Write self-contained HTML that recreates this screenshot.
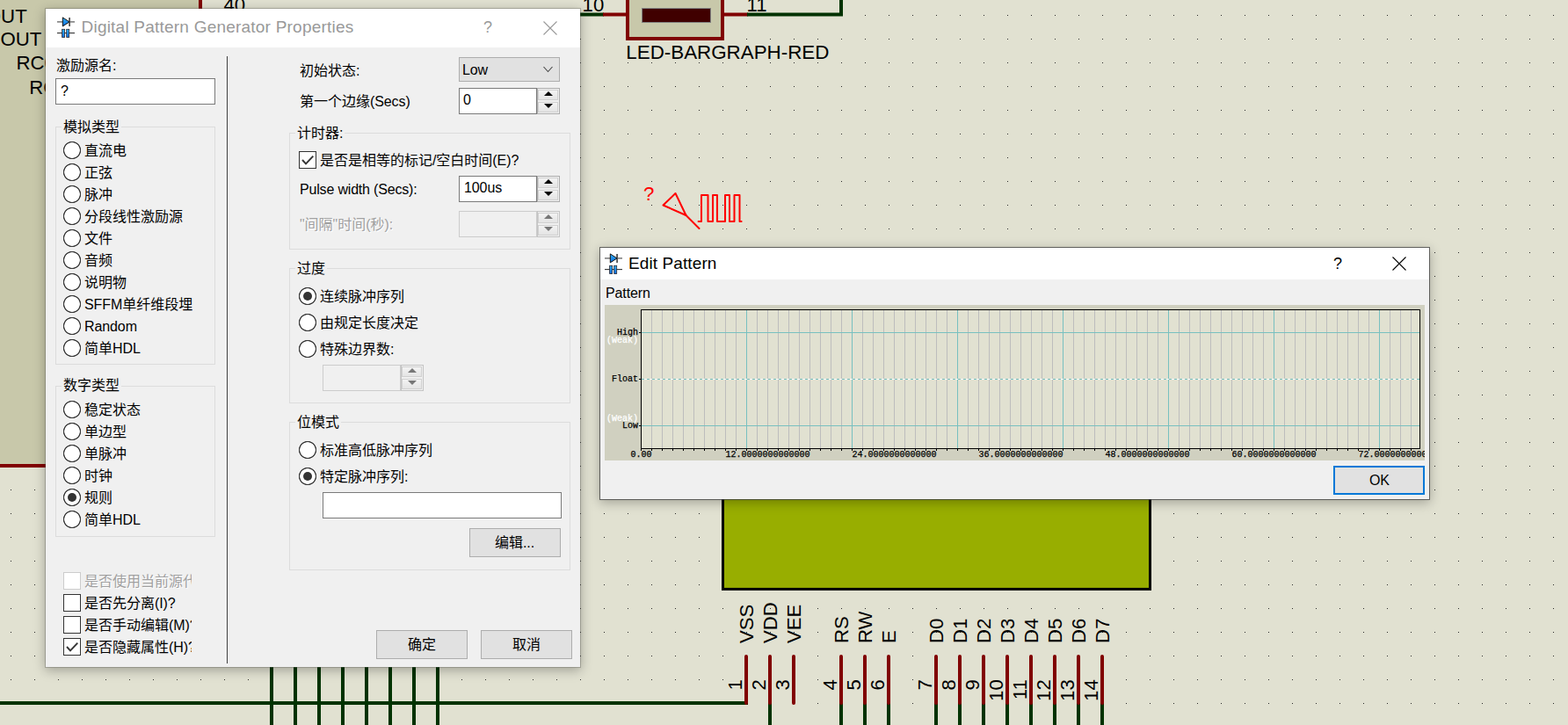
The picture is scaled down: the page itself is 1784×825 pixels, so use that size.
<!DOCTYPE html>
<html lang="zh">
<head>
<meta charset="utf-8">
<title>Digital Pattern Generator Properties</title>
<style>
*{box-sizing:border-box;margin:0;padding:0}
html,body{width:1784px;height:825px;overflow:hidden}
body{position:relative;background:#E1E1D1;font-family:"Liberation Sans","Noto Sans CJK SC",sans-serif;font-size:16px;color:#000}
.abs{position:absolute}
svg{display:block}
#sch{position:absolute;left:0;top:0}
#sch text{font-family:"Liberation Sans",sans-serif;font-size:22.2px;fill:#000}
.win{position:absolute;background:#F0F0F0}
.tbar{position:absolute;left:0;top:0;right:0;background:#fff}
.ttl{position:absolute;white-space:nowrap;font-size:19px;line-height:22px}
.lbl{position:absolute;white-space:nowrap;line-height:17px;height:17px;font-size:16px;letter-spacing:-0.1px}
.zh{display:inline-block;position:relative;height:17px;vertical-align:top;font-family:"Liberation Sans","Noto Sans CJK SC",sans-serif;font-size:16px;line-height:17px;letter-spacing:0;white-space:nowrap}
.dis{color:#A0A0A0;fill:#A0A0A0;text-shadow:1px 1px 0 #fff}
.grp{position:absolute;border:1px solid #DCDCDC}
.gl{background:#F0F0F0;padding:0 2px}
.radio{position:absolute;width:20px;height:20px}
.radio::before{content:"";position:absolute;left:-1px;top:-1px;width:22px;height:22px;background:radial-gradient(circle at 11px 11px,#fff 0,#fff 8.45px,#3a3a3a 9.05px,#3a3a3a 9.75px,rgba(58,58,58,0) 10.4px)}
.radio.on::after{content:"";position:absolute;left:5px;top:5px;width:10px;height:10px;border-radius:50%;background:#333}
.chk{position:absolute;width:20px;height:20px;background:#fff;border:1px solid #333}
.chk.off{border-color:#CCC}
.chk svg{position:absolute;left:0;top:0}
.edit{position:absolute;background:#fff;border:1px solid #7A7A7A}
.edit.off{background:#F0F0F0;border-color:#CCC}
.btn{position:absolute;background:#E1E1E1;border:1px solid #ADADAD;text-align:center}
.spin{position:absolute;width:26px;height:30px;border:1px solid #ADADAD;background:#F0F0F0}
.spin i{position:absolute;left:0;width:23px;height:12px;border:1px solid #D0D0D0;background:linear-gradient(#F3F3F3,#E4E4E4)}
.spin i.u{top:1px}.spin i.d{top:15px}
.spin i::after{content:"";position:absolute;left:5.5px;border-left:5px solid transparent;border-right:5px solid transparent}
.spin i.u::after{top:1px;border-bottom:5px solid #000}
.spin i.d::after{top:1px;border-top:5px solid #000}
.spin.off{border-color:#C4C4C4}
.spin.off i.u::after{border-bottom-color:#777}
.spin.off i.d::after{border-top-color:#777}
.clip{position:absolute;overflow:hidden}
#gr text{font-family:"Liberation Mono",monospace;font-size:10px;stroke:#000;stroke-width:.25px}
#gr text.w{fill:#fff;stroke:#fff}
</style>
</head>
<body>

<!-- ================= schematic background ================= -->
<svg id="sch" width="1784" height="825" viewBox="0 0 1784 825">
<defs>
<pattern id="dots" x="12" y="17" width="27" height="27" patternUnits="userSpaceOnUse"><rect x="0" y="0" width="1" height="1" fill="#2a2a2a"/></pattern>
</defs>
<rect width="1784" height="825" fill="#E1E1D1"/>
<rect width="1784" height="825" fill="url(#dots)"/>
<!-- MCU body -->
<rect x="-20" y="-20" width="248" height="550" fill="#C8C8AA" stroke="#800000" stroke-width="4"/>
<text x="30.7" y="25.5" text-anchor="end">OUT</text>
<text x="47.3" y="52" text-anchor="end">OUT</text>
<text x="18.4" y="79.4">RC0</text>
<text x="33.3" y="106.6">RC1</text>
<text x="254.5" y="12.5">40</text>
<!-- LED bargraph -->
<g stroke-width="4" fill="none">
<path d="M640 16.5H687" stroke="#003200"/><path d="M686 16.5H714" stroke="#800000"/>
<path d="M822 16.5H851" stroke="#800000"/><path d="M850 16.5H957V-5" stroke="#003200"/>
</g>
<rect x="714" y="-20" width="108" height="64" fill="#C8C8AA" stroke="#800000" stroke-width="4"/>
<rect x="730.5" y="9.5" width="78" height="16" fill="#400000" stroke="#808080" stroke-width="1"/>
<text x="687.3" y="12.5" text-anchor="end">10</text>
<text x="849.6" y="12.5">11</text>
<text x="712.3" y="67" style="font-size:22.36px">LED-BARGRAPH-RED</text>
<!-- generator -->
<g stroke="#FF0000" stroke-width="2" fill="none" stroke-linejoin="round" stroke-linecap="round">
<path d="M754.5 233.5L768.5 220L780.5 245Z"/><path d="M779.5 244L795.5 260"/>
<path d="M794.6 252H798V222H805.5V252H811V222H816V252H825V222H830V252H835.5V222H841.5V252H843.6"/>
</g>
<text x="732" y="228" style="fill:#FF0000">?</text>
<!-- LCD -->
<rect x="822.5" y="540" width="486" height="130.4" fill="#98AE00" stroke="#000" stroke-width="3"/>
<!-- bottom wires -->
<g stroke="#003200" stroke-width="4" fill="none">
<path d="M0 800H851"/>
<path d="M309 740V830M336 740V830M363 740V830M390 740V830M417 740V830M444 740V830M471 740V830M498 740V830"/>
<path d="M876 800V830M957 800V830M984 800V830M1011 800V830M1065 800V830M1092 800V830M1119 800V830M1146 800V830M1173 800V830M1200 800V830M1227 800V830M1254 800V830"/>
</g>
<g stroke="#800000" stroke-width="4" fill="none" stroke-linecap="round">
<path d="M849 747V800M876 747V800M903 747V800M957 747V800M984 747V800M1011 747V800M1065 747V800M1092 747V800M1119 747V800M1146 747V800M1173 747V800M1200 747V800M1227 747V800M1254 747V800"/>
</g>
<text transform="translate(857,732) rotate(-90)">VSS</text><text transform="translate(884,732) rotate(-90)">VDD</text><text transform="translate(911,732) rotate(-90)">VEE</text><text transform="translate(965,732) rotate(-90)">RS</text><text transform="translate(992,732) rotate(-90)">RW</text><text transform="translate(1019,732) rotate(-90)">E</text><text transform="translate(1073,732) rotate(-90)">D0</text><text transform="translate(1100,732) rotate(-90)">D1</text><text transform="translate(1127,732) rotate(-90)">D2</text><text transform="translate(1154,732) rotate(-90)">D3</text><text transform="translate(1181,732) rotate(-90)">D4</text><text transform="translate(1208,732) rotate(-90)">D5</text><text transform="translate(1235,732) rotate(-90)">D6</text><text transform="translate(1262,732) rotate(-90)">D7</text>
<text transform="translate(844,773.2) rotate(-90)" text-anchor="end">1</text><text transform="translate(871,773.2) rotate(-90)" text-anchor="end">2</text><text transform="translate(898,773.2) rotate(-90)" text-anchor="end">3</text><text transform="translate(952,773.2) rotate(-90)" text-anchor="end">4</text><text transform="translate(979,773.2) rotate(-90)" text-anchor="end">5</text><text transform="translate(1006,773.2) rotate(-90)" text-anchor="end">6</text><text transform="translate(1060,773.2) rotate(-90)" text-anchor="end">7</text><text transform="translate(1087,773.2) rotate(-90)" text-anchor="end">8</text><text transform="translate(1114,773.2) rotate(-90)" text-anchor="end">9</text><text transform="translate(1141,773.2) rotate(-90)" text-anchor="end">10</text><text transform="translate(1168,773.2) rotate(-90)" text-anchor="end">11</text><text transform="translate(1195,773.2) rotate(-90)" text-anchor="end">12</text><text transform="translate(1222,773.2) rotate(-90)" text-anchor="end">13</text><text transform="translate(1249,773.2) rotate(-90)" text-anchor="end">14</text>
</svg>

<!--DLG1-->
<!-- ================= Digital Pattern Generator Properties ================= -->
<div class="win" id="dlg1" style="left:52px;top:10px;width:608px;height:749px;box-shadow:0 0 0 1px rgba(90,90,80,.35),0 3px 12px 1px rgba(0,0,0,.28)">
<div class="tbar" style="height:44px"></div>
</div>
<!-- icon -->
<svg class="abs" style="left:64px;top:18px" width="22" height="26" viewBox="64 18 22 26">
<defs><linearGradient id="ig" x1="0" y1="0" x2="0" y2="1"><stop offset="0" stop-color="#2FB0F8"/><stop offset="1" stop-color="#0F6BDC"/></linearGradient></defs>
<path d="M65 24.9H85" stroke="#6E6E6E" stroke-width="1.4"/>
<path d="M65 37.6H85" stroke="#333" stroke-width="1.1"/>
<path d="M79.1 20V30" stroke="#555" stroke-width="1.8"/>
<path d="M71.3 19.9V29.9L79 24.9Z" fill="url(#ig)" stroke="#111" stroke-width="1"/>
<rect x="70.6" y="33.3" width="3" height="9.2" fill="url(#ig)" stroke="#2A2A33" stroke-width=".8"/>
<rect x="75.7" y="33.3" width="3" height="9.2" fill="url(#ig)" stroke="#2A2A33" stroke-width=".8"/>
</svg>
<div class="ttl" style="left:92.5px;top:20px;color:#999;letter-spacing:.22px">Digital Pattern Generator Properties</div>
<div class="ttl" style="left:550px;top:20px;color:#999;font-size:18px">?</div>
<svg class="abs" style="left:617px;top:23px" width="18" height="18"><path d="M1.5 1.5L16.5 16.5M16.5 1.5L1.5 16.5" stroke="#999" stroke-width="1.1" fill="none"/></svg>

<div class="lbl " style="left:64px;top:66px;"><span class="zh" style="width:64px">激励源名</span>:</div>
<div class="edit" style="left:63px;top:89px;width:182px;height:30px"></div>
<div class="lbl " style="left:69px;top:95px;">?</div>

<div class="grp" style="left:63px;top:144px;width:182px;height:271px"></div>
<div class="lbl gl" style="left:70px;top:136px;"><span class="zh" style="width:64px">模拟类型</span></div>
<div class="radio" style="left:72px;top:161px"></div><div class="radio" style="left:72px;top:186px"></div><div class="radio" style="left:72px;top:211px"></div><div class="radio" style="left:72px;top:236px"></div><div class="radio" style="left:72px;top:261px"></div><div class="radio" style="left:72px;top:286px"></div><div class="radio" style="left:72px;top:311px"></div><div class="radio" style="left:72px;top:336px"></div><div class="radio" style="left:72px;top:361px"></div><div class="radio" style="left:72px;top:386px"></div>
<div class="lbl " style="left:96px;top:163px;"><span class="zh" style="width:48px">直流电</span></div><div class="lbl " style="left:96px;top:188px;"><span class="zh" style="width:32px">正弦</span></div><div class="lbl " style="left:96px;top:213px;"><span class="zh" style="width:32px">脉冲</span></div><div class="lbl " style="left:96px;top:238px;"><span class="zh" style="width:112px">分段线性激励源</span></div><div class="lbl " style="left:96px;top:263px;"><span class="zh" style="width:32px">文件</span></div><div class="lbl " style="left:96px;top:288px;"><span class="zh" style="width:32px">音频</span></div><div class="lbl " style="left:96px;top:313px;"><span class="zh" style="width:48px">说明物</span></div><div class="lbl " style="left:96px;top:338px;">SFFM<span class="zh" style="width:80px">单纤维段埋</span></div><div class="lbl " style="left:96px;top:363px;">Random</div><div class="lbl " style="left:96px;top:388px;"><span class="zh" style="width:32px">简单</span>HDL</div>

<div class="grp" style="left:63px;top:439px;width:182px;height:172px"></div>
<div class="lbl gl" style="left:70px;top:430px;"><span class="zh" style="width:64px">数字类型</span></div>
<div class="radio" style="left:72px;top:456px"></div><div class="radio" style="left:72px;top:481px"></div><div class="radio" style="left:72px;top:506px"></div><div class="radio" style="left:72px;top:531px"></div><div class="radio on" style="left:72px;top:556px"></div><div class="radio" style="left:72px;top:581px"></div>
<div class="lbl " style="left:96px;top:458px;"><span class="zh" style="width:64px">稳定状态</span></div><div class="lbl " style="left:96px;top:483px;"><span class="zh" style="width:48px">单边型</span></div><div class="lbl " style="left:96px;top:508px;"><span class="zh" style="width:48px">单脉冲</span></div><div class="lbl " style="left:96px;top:533px;"><span class="zh" style="width:32px">时钟</span></div><div class="lbl " style="left:96px;top:558px;"><span class="zh" style="width:32px">规则</span></div><div class="lbl " style="left:96px;top:583px;"><span class="zh" style="width:32px">简单</span>HDL</div>

<div class="chk off" style="left:72px;top:651px"></div>
<div class="chk" style="left:72px;top:676px"></div>
<div class="chk" style="left:72px;top:701px"></div>
<div class="chk" style="left:72px;top:726px"><svg width="18" height="18"><path d="M3 9L7 13.3L15.3 4.6" stroke="#333" stroke-width="1.9" fill="none"/></svg></div>
<div class="clip" style="left:96px;top:650px;width:122px;height:100px">
<div class="lbl dis" style="left:0px;top:3px;"><span class="zh" style="width:144px">是否使用当前源代码</span></div>
<div class="lbl " style="left:0px;top:28px;"><span class="zh" style="width:80px">是否先分离</span>(I)?</div>
<div class="lbl " style="left:0px;top:53px;"><span class="zh" style="width:96px">是否手动编辑</span>(M)?</div>
<div class="lbl " style="left:0px;top:78px;"><span class="zh" style="width:96px">是否隐藏属性</span>(H)?</div>
</div>

<div class="abs" style="left:258px;top:64px;width:1px;height:691px;background:#3a3a3a"></div>
<div class="abs" style="left:259px;top:64px;width:1px;height:691px;background:#fff"></div>

<div class="lbl " style="left:341px;top:72px;"><span class="zh" style="width:64px">初始状态</span>:</div>
<div class="btn" style="left:522px;top:65px;width:115px;height:28px"></div>
<div class="lbl " style="left:526px;top:71px;">Low</div>
<svg class="abs" style="left:616px;top:73px" width="16" height="12"><path d="M2.5 3L7.5 8.5L12.5 3" stroke="#444" stroke-width="1.1" fill="none"/></svg>

<div class="lbl " style="left:341px;top:107px;"><span class="zh" style="width:80px">第一个边缘</span>(Secs)</div>
<div class="edit" style="left:522px;top:100px;width:89px;height:30px"></div>
<div class="spin" style="left:611px;top:100px"><i class="u"></i><i class="d"></i></div>
<div class="lbl " style="left:527px;top:105px;">0</div>

<div class="grp" style="left:329px;top:151px;width:320px;height:133px"></div>
<div class="lbl gl" style="left:336px;top:143px;"><span class="zh" style="width:48px">计时器</span>:</div>
<div class="chk" style="left:340px;top:172px"><svg width="18" height="18"><path d="M3 9L7 13.3L15.3 4.6" stroke="#333" stroke-width="1.9" fill="none"/></svg></div>
<div class="lbl " style="left:364px;top:174px;"><span class="zh" style="width:128px">是否是相等的标记</span>/<span class="zh" style="width:64px">空白时间</span>(E)?</div>
<div class="lbl " style="left:341px;top:207px;letter-spacing:-.18px">Pulse width (Secs):</div>
<div class="edit" style="left:522px;top:200px;width:89px;height:30px"></div>
<div class="spin" style="left:611px;top:200px"><i class="u"></i><i class="d"></i></div>
<div class="lbl " style="left:528px;top:205px;">100us</div>
<div class="lbl dis" style="left:341px;top:247px;">&quot;<span class="zh" style="width:32px">间隔</span>&quot;<span class="zh" style="width:32px">时间</span>(<span class="zh" style="width:16px">秒</span>):</div>
<div class="edit off" style="left:522px;top:240px;width:89px;height:30px"></div>
<div class="spin off" style="left:611px;top:240px"><i class="u"></i><i class="d"></i></div>

<div class="grp" style="left:329px;top:305px;width:320px;height:154px"></div>
<div class="lbl gl" style="left:336px;top:297px;"><span class="zh" style="width:32px">过度</span></div>
<div class="radio on" style="left:340px;top:327px"></div>
<div class="radio" style="left:340px;top:357px"></div>
<div class="radio" style="left:340px;top:387px"></div>
<div class="lbl " style="left:364px;top:329px;"><span class="zh" style="width:96px">连续脉冲序列</span></div>
<div class="lbl " style="left:364px;top:359px;"><span class="zh" style="width:112px">由规定长度决定</span></div>
<div class="lbl " style="left:364px;top:389px;"><span class="zh" style="width:80px">特殊边界数</span>:</div>
<div class="edit off" style="left:367px;top:415px;width:89px;height:30px"></div>
<div class="spin off" style="left:456px;top:415px"><i class="u"></i><i class="d"></i></div>

<div class="grp" style="left:329px;top:480px;width:320px;height:169px"></div>
<div class="lbl gl" style="left:336px;top:472px;"><span class="zh" style="width:48px">位模式</span></div>
<div class="radio" style="left:340px;top:502px"></div>
<div class="radio on" style="left:340px;top:532px"></div>
<div class="lbl " style="left:364px;top:504px;"><span class="zh" style="width:128px">标准高低脉冲序列</span></div>
<div class="lbl " style="left:364px;top:534px;"><span class="zh" style="width:96px">特定脉冲序列</span>:</div>
<div class="edit" style="left:367px;top:560px;width:272px;height:30px"></div>
<div class="btn" style="left:534px;top:601px;width:104px;height:33px"></div>
<div class="lbl " style="left:563px;top:609px;"><span class="zh" style="width:32px">编辑</span>...</div>
<div class="btn" style="left:428px;top:717px;width:104px;height:33px"></div>
<div class="lbl " style="left:464px;top:725px;"><span class="zh" style="width:32px">确定</span></div>
<div class="btn" style="left:547px;top:717px;width:104px;height:33px"></div>
<div class="lbl " style="left:583px;top:725px;"><span class="zh" style="width:32px">取消</span></div>
<!--/DLG1-->
<!--DLG2-->
<!-- ================= Edit Pattern ================= -->
<div class="win" id="dlg2" style="left:683px;top:282px;width:943px;height:286px;box-shadow:0 0 0 1px rgba(60,60,60,.75),0 3px 12px 1px rgba(0,0,0,.28)">
<div class="tbar" style="height:36px"></div>
</div>
<svg class="abs" style="left:687px;top:286px" width="22" height="26" viewBox="64 17 22 26">
<defs><linearGradient id="ig2" x1="0" y1="0" x2="0" y2="1"><stop offset="0" stop-color="#2FB0F8"/><stop offset="1" stop-color="#0F6BDC"/></linearGradient></defs>
<path d="M65 24.9H85" stroke="#6E6E6E" stroke-width="1.4"/>
<path d="M65 37.6H85" stroke="#333" stroke-width="1.1"/>
<path d="M79.1 20V30" stroke="#555" stroke-width="1.8"/>
<path d="M71.3 19.9V29.9L79 24.9Z" fill="url(#ig2)" stroke="#111" stroke-width="1"/>
<rect x="70.6" y="33.3" width="3" height="9.2" fill="url(#ig2)" stroke="#2A2A33" stroke-width=".8"/>
<rect x="75.7" y="33.3" width="3" height="9.2" fill="url(#ig2)" stroke="#2A2A33" stroke-width=".8"/>
</svg>
<div class="ttl" style="left:715px;top:288.5px;color:#000;letter-spacing:.1px">Edit Pattern</div>
<div class="ttl" style="left:1517px;top:288.5px;color:#000;font-size:18px">?</div>
<svg class="abs" style="left:1583px;top:291px" width="18" height="18"><path d="M1.5 1.5L16.5 16.5M16.5 1.5L1.5 16.5" stroke="#000" stroke-width="1.1" fill="none"/></svg>
<div class="lbl " style="left:689px;top:324.5px;">Pattern</div>
<svg id="gr" class="abs" style="left:688px;top:347px" width="933" height="177" viewBox="688 347 933 177">
<rect x="688" y="347" width="933" height="177" fill="#D0D0C0"/>
<rect x="729.5" y="352.5" width="886" height="158" fill="#E1E1D1"/>
<path d="M741.5 353V510M753.5 353V510M765.5 353V510M777.5 353V510M789.5 353V510M801.5 353V510M813.5 353V510M825.5 353V510M837.5 353V510M861.5 353V510M873.5 353V510M885.5 353V510M897.5 353V510M909.5 353V510M921.5 353V510M933.5 353V510M945.5 353V510M957.5 353V510M981.5 353V510M993.5 353V510M1005.5 353V510M1017.5 353V510M1029.5 353V510M1041.5 353V510M1053.5 353V510M1065.5 353V510M1077.5 353V510M1101.5 353V510M1113.5 353V510M1125.5 353V510M1137.5 353V510M1149.5 353V510M1161.5 353V510M1173.5 353V510M1185.5 353V510M1197.5 353V510M1221.5 353V510M1233.5 353V510M1245.5 353V510M1257.5 353V510M1269.5 353V510M1281.5 353V510M1293.5 353V510M1305.5 353V510M1317.5 353V510M1341.5 353V510M1353.5 353V510M1365.5 353V510M1377.5 353V510M1389.5 353V510M1401.5 353V510M1413.5 353V510M1425.5 353V510M1437.5 353V510M1461.5 353V510M1473.5 353V510M1485.5 353V510M1497.5 353V510M1509.5 353V510M1521.5 353V510M1533.5 353V510M1545.5 353V510M1557.5 353V510M1581.5 353V510M1593.5 353V510M1605.5 353V510" stroke="#BDBDBD" stroke-width="1"/>
<path d="M849.5 353V510M969.5 353V510M1089.5 353V510M1209.5 353V510M1329.5 353V510M1449.5 353V510M1569.5 353V510" stroke="#78C0C0" stroke-width="1"/>
<path d="M730 378.5H1615M730 484.5H1615" stroke="#78C0C0" stroke-width="1"/>
<path d="M730 431.5H1615" stroke="#fff" stroke-width="1"/>
<path d="M730 431.5H1615" stroke="#78C0C0" stroke-width="1" stroke-dasharray="3 3"/>
<path d="M727 378.5H730M727 431.5H730M727 484.5H730" stroke="#000" stroke-width="1"/>
<path d="M729.5 510V513M741.5 510V513M753.5 510V513M765.5 510V513M777.5 510V513M789.5 510V513M801.5 510V513M813.5 510V513M825.5 510V513M837.5 510V513M849.5 510V513M861.5 510V513M873.5 510V513M885.5 510V513M897.5 510V513M909.5 510V513M921.5 510V513M933.5 510V513M945.5 510V513M957.5 510V513M969.5 510V513M981.5 510V513M993.5 510V513M1005.5 510V513M1017.5 510V513M1029.5 510V513M1041.5 510V513M1053.5 510V513M1065.5 510V513M1077.5 510V513M1089.5 510V513M1101.5 510V513M1113.5 510V513M1125.5 510V513M1137.5 510V513M1149.5 510V513M1161.5 510V513M1173.5 510V513M1185.5 510V513M1197.5 510V513M1209.5 510V513M1221.5 510V513M1233.5 510V513M1245.5 510V513M1257.5 510V513M1269.5 510V513M1281.5 510V513M1293.5 510V513M1305.5 510V513M1317.5 510V513M1329.5 510V513M1341.5 510V513M1353.5 510V513M1365.5 510V513M1377.5 510V513M1389.5 510V513M1401.5 510V513M1413.5 510V513M1425.5 510V513M1437.5 510V513M1449.5 510V513M1461.5 510V513M1473.5 510V513M1485.5 510V513M1497.5 510V513M1509.5 510V513M1521.5 510V513M1533.5 510V513M1545.5 510V513M1557.5 510V513M1569.5 510V513M1581.5 510V513M1593.5 510V513M1605.5 510V513" stroke="#000" stroke-width="1"/>
<rect x="729.5" y="352.5" width="886" height="158" fill="none" stroke="#000" stroke-width="1"/>
<text x="726" y="381" text-anchor="end">High</text>
<text x="726" y="389.5" text-anchor="end" class="w">(Weak)</text>
<text x="726" y="434" text-anchor="end">Float</text>
<text x="726" y="478.5" text-anchor="end" class="w">(Weak)</text>
<text x="726" y="487" text-anchor="end">Low</text>
<text x="717.5" y="520">0.00</text>
<text x="825.5" y="520">12.0000000000000</text><text x="969.5" y="520">24.0000000000000</text><text x="1113.5" y="520">36.0000000000000</text><text x="1257.5" y="520">48.0000000000000</text><text x="1401.5" y="520">60.0000000000000</text><text x="1545.5" y="520">72.0000000000000</text>
</svg>
<div class="btn" style="left:1517px;top:530px;width:104px;height:33px;border:2px solid #0078D7"></div>
<div class="lbl " style="left:1558px;top:538px;">OK</div>
<!--/DLG2-->
</body>
</html>
